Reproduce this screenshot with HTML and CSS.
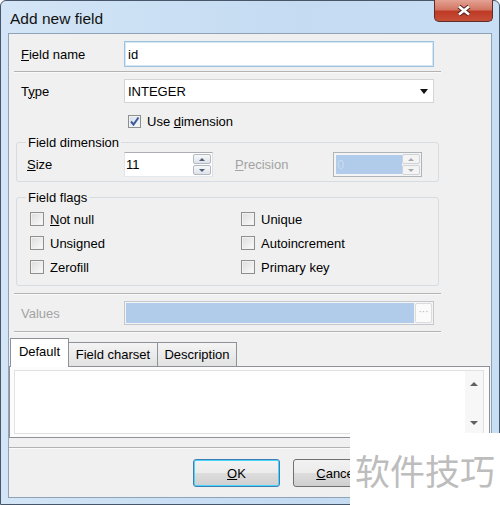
FILE: index.html
```html
<!DOCTYPE html>
<html lang="en">
<head>
  <meta charset="UTF-8" />
  <title>Add new field</title>
  <link rel="stylesheet" href="styles.css">
</head>
<body>
  <div class="window">
    <div class="titlebar">
      <span class="title">Add new field</span>
      <span class="close">
        <svg width="18" height="13" viewBox="0 0 18 13">
          <path d="M4 2.5 L14 10.5 M14 2.5 L4 10.5" stroke="#4a1e16" stroke-width="4.6"/>
          <path d="M4 2.5 L14 10.5 M14 2.5 L4 10.5" stroke="#fff" stroke-width="2.8"/>
        </svg>
      </span>
    </div>

    <div class="content">
      <div class="row row-name">
        <label class="lbl"><u>F</u>ield name</label>
        <div class="edit focused">id</div>
      </div>
      <div class="sep"></div>

      <div class="row row-type">
        <label class="lbl">T<u>y</u>pe</label>
        <div class="edit combo">INTEGER<span class="arrow"></span></div>
      </div>

      <div class="row row-check">
        <span class="check">
          <svg width="11" height="11" viewBox="0 0 11 11"><path d="M2 5.5 L4.5 8.5 L9.5 1.5" fill="none" stroke="#3d5b9a" stroke-width="2"/></svg>
        </span>
        <span>Use <u>d</u>imension</span>
      </div>

      <div class="group group-dim">
        <div class="legend">Field dimension</div>
        <div class="dim-row">
          <label class="lbl size-lbl"><u>S</u>ize</label>
          <div class="spin">
            <span class="spin-text">11</span>
            <span class="spin-btns"><span class="sb up"></span><span class="sb down"></span></span>
          </div>
          <label class="lbl prec-lbl disabled"><u>P</u>recision</label>
          <div class="spin off">
            <span class="spin-text">0</span>
            <span class="spin-btns"><span class="sb up"></span><span class="sb down"></span></span>
          </div>
        </div>
      </div>

      <div class="group group-flags">
        <div class="legend">Field flags</div>
        <div class="flags">
          <div class="flag"><span class="check"></span><span><u>N</u>ot null</span></div>
          <div class="flag"><span class="check"></span><span>Unique</span></div>
          <div class="flag"><span class="check"></span><span>Unsigned</span></div>
          <div class="flag"><span class="check"></span><span>Autoincrement</span></div>
          <div class="flag"><span class="check"></span><span>Zerofill</span></div>
          <div class="flag"><span class="check"></span><span>Primary key</span></div>
        </div>
      </div>
      <div class="sep sep-values"></div>

      <div class="row row-values">
        <label class="lbl disabled">Values</label>
        <div class="edit off values"><span class="fill"></span><span class="dots">&middot;&middot;&middot;</span></div>
      </div>
      <div class="sep sep-tabs"></div>

      <div class="tabs">
        <span class="tab active t-default">Default</span>
        <span class="tab t-charset">Field charset</span>
        <span class="tab t-desc">Description</span>
      </div>
      <div class="panel">
        <div class="memo">
          <div class="memo-text"></div>
          <div class="scroll"><span class="s-up"></span><span class="s-down"></span></div>
        </div>
      </div>
      <div class="sep sep-bottom"></div>

      <div class="buttons">
        <span class="btn default"><u>O</u>K</span>
        <span class="btn"><u>C</u>ancel</span>
      </div>
    </div>

    <div class="watermark">软件技巧</div>
  </div>
</body>
</html>
```

FILE: styles.css
```css
* {
  box-sizing: border-box;
}

body {
  margin: 0;
  padding: 0;
  font-family: "Liberation Sans", Arial, sans-serif;
  font-size: 13px;
  color: #000;
  background: #fff;
}

u {
  text-decoration: underline;
  text-underline-offset: 1px;
}

.window {
  position: relative;
  width: 500px;
  height: 505px;
  border: 1px solid #48566a;
  border-radius: 6px 6px 0 0;
  padding: 0 7px 6px 7px;
  display: flex;
  flex-direction: column;
  background: linear-gradient(to right, #d3e5f6, #c4dbf2 60%, #c8def4);
}

.titlebar {
  height: 32px;
  display: flex;
  align-items: flex-start;
}

.title {
  font-size: 15.5px;
  padding: 9px 0 0 2px;
  color: #111;
}

.close {
  margin-left: auto;
  margin-top: -1px;
  margin-right: -1px;
  width: 59px;
  height: 22px;
  border: 1px solid #5d2d26;
  border-top: none;
  border-radius: 0 0 5px 5px;
  background: linear-gradient(#e5a294, #d27764 45%, #bf3a26 55%, #c54f38);
  display: flex;
  align-items: center;
  justify-content: center;
}

.content {
  flex: 1;
  background: #f0f0f0;
  border: 1px solid #8ea3b8;
  padding-top: 7px;
}

.row {
  display: flex;
  align-items: center;
  padding-left: 12px;
}

.lbl {
  width: 103px;
  flex: none;
}

.disabled {
  color: #a3a3a3;
}

.edit {
  width: 310px;
  height: 24px;
  background: #fff;
  border: 1px solid #d9dde2;
  padding-left: 3px;
  display: flex;
  align-items: center;
}

.row-name .edit {
  height: 26px;
}

.edit.focused {
  border-color: #9ec3df;
  box-shadow: inset 0 0 0 1px #d6e8f5;
}

.combo {
  position: relative;
  border-color: #d4d4d4;
}

.arrow {
  margin-left: auto;
  margin-right: 5px;
  width: 0;
  height: 0;
  border-left: 4px solid transparent;
  border-right: 4px solid transparent;
  border-top: 5px solid #111;
}

.sep {
  margin: 4px 0 0 5px;
  width: 427px;
  height: 2px;
  border-top: 1px solid #b3b3b3;
  border-bottom: 1px solid #fafafa;
}

.row-type {
  margin-top: 6px;
}

.row-check {
  margin-top: 12px;
  padding-left: 119px;
  height: 13px;
  gap: 6px;
}

.check {
  width: 13px;
  height: 13px;
  flex: none;
  border: 1px solid #8e8f8f;
  background: linear-gradient(135deg, #dcdcdc, #fbfbfb);
  box-shadow: inset 0 0 0 1px #f2f2f2;
  display: flex;
  align-items: center;
  justify-content: center;
}

.row-check .check {
  background: linear-gradient(135deg, #d4deeb, #f7f9fc);
}

.group {
  margin-left: 7px;
  width: 423px;
  border: 1px solid #d5dde3;
  border-radius: 3px;
}

.group-dim {
  margin-top: 14px;
  padding-bottom: 4px;
}

.group-flags {
  margin-top: 15px;
  padding-bottom: 6px;
}

.legend {
  width: fit-content;
  margin: -8px 0 0 9px;
  padding: 0 2px;
  line-height: 15px;
  background: #f0f0f0;
}

.dim-row {
  margin-top: 2px;
  padding-left: 10px;
  display: flex;
  align-items: center;
  height: 25px;
}

.size-lbl {
  width: 97px;
}

.prec-lbl {
  width: 98px;
  margin-left: 22px;
}

.spin {
  width: 89px;
  height: 25px;
  background: #fff;
  border: 1px solid #abadb3;
  border-color: #abadb3 #dbdfe6 #e3e9ef #e2e3ea;
  display: flex;
  align-items: stretch;
}

.spin-text {
  flex: 1;
  padding-left: 1px;
  display: flex;
  align-items: center;
}

.spin-btns {
  width: 19px;
  display: flex;
  flex-direction: column;
  gap: 1px;
  padding: 1px 1px 1px 0;
}

.sb {
  flex: 1;
  border: 1px solid #b2b9c2;
  border-radius: 2px;
  background: linear-gradient(#f7f8f9, #dfe3e8);
  display: flex;
  align-items: center;
  justify-content: center;
}

.sb::after {
  content: "";
  width: 0;
  height: 0;
  border-left: 3px solid transparent;
  border-right: 3px solid transparent;
}

.up::after {
  border-bottom: 3px solid #4b5f7e;
}

.down::after {
  border-top: 3px solid #4b5f7e;
}

.spin.off {
  border: 1px solid #afb4b8;
  background: #f4f4f4;
}

.spin.off .spin-text {
  margin: 2px 0 2px 2px;
  background: #b1cbea;
  color: #cbdaeb;
}

.spin.off .sb {
  border-color: #cfd3d7;
  background: #f4f4f4;
}

.spin.off .up::after {
  border-bottom-color: #a8a8a8;
}

.spin.off .down::after {
  border-top-color: #a8a8a8;
}

.flags {
  margin-top: 2px;
  padding-left: 13px;
  display: grid;
  grid-template-columns: 211px 1fr;
  grid-auto-rows: 24px;
}

.flag {
  display: flex;
  align-items: center;
  gap: 6px;
}

.flag .check {
  width: 14px;
  height: 14px;
}

.sep-values {
  margin-top: 7px;
}

.row-values {
  margin-top: 6px;
}

.edit.off {
  border-color: #c4c8cc;
  background: #f4f4f4;
  padding: 1px;
}

.values .fill {
  flex: 1;
  height: 100%;
  background: #b1cbea;
}

.values .dots {
  width: 17px;
  height: 100%;
  margin-left: 1px;
  background: #fbfbfb;
  border: 1px solid #dcdcdc;
  border-radius: 2px;
  color: #b0b0b0;
  font-size: 10px;
  line-height: 16px;
  text-align: center;
}

.sep-tabs {
  margin-top: 6px;
}

.tabs {
  margin: 5px 0 0 1px;
  height: 28px;
  display: flex;
  align-items: flex-end;
}

.tab {
  height: 24px;
  border: 1px solid #8e9199;
  border-bottom: none;
  background: linear-gradient(#f4f4f4, #e2e2e2);
  text-align: center;
  line-height: 24px;
  margin-left: -1px;
}

.tab.active {
  position: relative;
  z-index: 1;
  height: 29px;
  margin-bottom: -1px;
  margin-left: 0;
  background: #fff;
  line-height: 25px;
}

.t-default {
  width: 59px;
}

.t-charset {
  width: 90px;
}

.t-desc {
  width: 80px;
}

.panel {
  width: 481px;
  height: 72px;
  border: 1px solid #8e9199;
  background: #fcfcfc;
  padding: 3px 5px 3px 4px;
}

.memo {
  height: 100%;
  border: 1px solid #e1e1e1;
  background: #fff;
  display: flex;
}

.memo-text {
  flex: 1;
}

.scroll {
  width: 18px;
  background: #f7f7f7;
  display: flex;
  flex-direction: column;
  justify-content: space-between;
  align-items: center;
  padding: 11px 0 8px;
}

.s-up,
.s-down {
  width: 0;
  height: 0;
  border-left: 4px solid transparent;
  border-right: 4px solid transparent;
}

.s-up {
  border-bottom: 4px solid #606060;
}

.s-down {
  border-top: 4px solid #606060;
}

.sep-bottom {
  margin: 9px 0 0 0;
  width: 482px;
}

.buttons {
  margin-top: 10px;
  padding-left: 184px;
  display: flex;
  gap: 13px;
}

.btn {
  width: 87px;
  height: 28px;
  border: 1px solid #707070;
  border-radius: 3px;
  background: linear-gradient(#f2f2f2, #ebebeb 50%, #dddddd 51%, #cfcfcf);
  display: flex;
  align-items: center;
  justify-content: center;
}

.btn.default {
  border-color: #3c7fb1;
  box-shadow: inset 0 0 0 1px #48d4fc;
}

.watermark {
  position: absolute;
  left: 349px;
  top: 432px;
  width: 151px;
  height: 73px;
  background: #fff;
  color: #bdbdbd;
  font-family: "Noto Sans CJK SC", sans-serif;
  font-size: 35px;
  line-height: 73px;
  padding-left: 5px;
}
```
